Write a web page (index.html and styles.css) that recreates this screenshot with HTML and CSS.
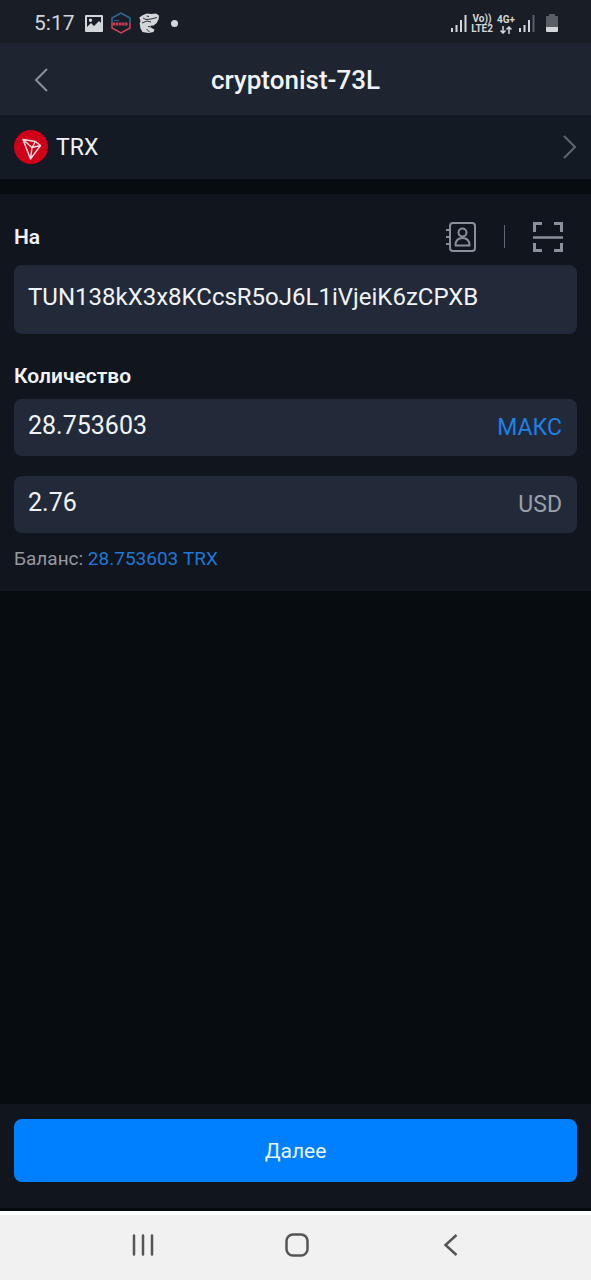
FILE: index.html
```html
<!DOCTYPE html>
<html lang="ru">
<head>
<meta charset="utf-8">
<meta name="viewport" content="width=device-width, initial-scale=1">
<title>cryptonist-73L</title>
<link rel="stylesheet" href="styles.css">
</head>
<body>
<div class="screen">
  <div class="status">
    <div class="status-group status-left">
      <span class="clock">5:17</span>
      <svg class="ico-picture" width="18" height="17" viewBox="0 0 18 17"><path fill="#d3d6da" fill-rule="evenodd" d="M1 0h16a1 1 0 0 1 1 1v15a1 1 0 0 1-1 1H1a1 1 0 0 1-1-1V1a1 1 0 0 1 1-1zm1 2v10l4-4 3 3 5-5 2 2V2zM5.500 3.500a1.700 1.700 0 1 1 0 3.400 1.700 1.700 0 0 1 0-3.400z"/></svg>
      <svg class="ico-hex" width="20" height="22" viewBox="0 0 20 22" fill="none" stroke-width="1.500"><path stroke="#2d6c9d" d="M1 11V6l9-5 9 5v5"/><path stroke="#d0435a" d="M1 11v5l9 5 9-5v-5"/><path stroke="#2b5f91" stroke-width="1.200" d="M3 8.500h5"/><path stroke="#c93a51" stroke-width="3" stroke-dasharray="2.500 .5" d="M1.500 12h15.500"/></svg>
      <svg class="ico-dog" width="20" height="20" viewBox="0 0 20 20"><path fill="#d3d6da" d="M4 2 8 .5l4 .5 5-.5 3 2-.3 3.500-2 4-3.200 2.500-3 .3 1 2.200 3 1.500-1 2.500-5 1-6-1-2-3.500-.8-5L1.500 8 .3 4.500z"/><path fill="none" stroke="#181d26" stroke-width=".9" d="m4 5 3 1.500 5-.5 6-1.500M3 10l5-2 4 1M9 13.500l3.500.5M7.500 3l2.500.5M10.500 19l-3-3"/></svg>
      <span class="dot"></span>
    </div>
    <div class="status-group status-right">
      <svg width="16" height="17" viewBox="0 0 16 17" fill="#d3d6da"><path d="M0 13h2v4H0zM4.500 10h2v7h-2zM9 5h2v12H9zM13.500 0h2v17h-2z"/></svg>
      <span class="net">Vo))<br>LTE2</span>
      <span class="net">4G+<svg class="ico-arrows" width="12" height="8" viewBox="0 0 12 8" fill="none" stroke="#d3d6da" stroke-width="1.500"><path d="M3 0v7M.5 4.500 3 7l2.500-2.500M9 8V1M6.500 3.500 9 1l2.500 2.500"/></svg></span>
      <svg width="16" height="17" viewBox="0 0 16 17" fill="#d3d6da"><path d="M0 13h2v4H0zM4.500 10h2v7h-2zM9 5h2v12H9z"/><path fill="#5a5f68" d="M13.500 0h2v17h-2z"/></svg>
      <svg class="ico-battery" width="12" height="18" viewBox="0 0 12 18"><path fill="#5a5e65" d="M3 0h6v2h2a1 1 0 0 1 1 1v10H0V3a1 1 0 0 1 1-1h2z"/><path fill="#d3d6da" d="M0 13h12v4a1 1 0 0 1-1 1H1a1 1 0 0 1-1-1z"/></svg>
    </div>
  </div>

  <header class="header">
    <button class="icon-btn back" aria-label="Назад"><svg width="14" height="24" viewBox="0 0 14 24" fill="none" stroke="#8a909a" stroke-width="2"><path d="M13 1 2 12l11 11"/></svg></button>
    <h1 class="title">cryptonist-73L</h1>
  </header>

  <a class="coin" href="#">
    <svg width="34" height="34" viewBox="0 0 34 34"><circle cx="17" cy="17" r="17" fill="#d00018"/><path fill="none" stroke="#f6dfe3" stroke-width="1.400" stroke-linejoin="round" d="M9 9.500 21.500 11.500 26.500 15.500 16.500 29zM9 9.500 18 17.500 16.500 29M18 17.500l8.500-2M18 17.500l3.500-6"/></svg>
    <span class="coin-name">TRX</span>
    <svg width="14" height="24" viewBox="0 0 14 24" fill="none" stroke="#5f6670" stroke-width="2"><path d="m1 1 11 11L1 23"/></svg>
  </a>

  <main class="form">
    <div class="to-row">
      <label class="label" for="address">На</label>
      <div class="tools">
        <button class="icon-btn" aria-label="Контакты"><svg width="30" height="30" viewBox="0 0 30 30" fill="none" stroke="#8a8f99" stroke-width="2"><rect x="4" y="1" width="25" height="28" rx="3"/><path d="M0 8h5M0 15h5M0 22h5"/><circle cx="16.500" cy="10.500" r="4"/><path stroke-linejoin="round" d="M9.500 23.500c0-5 3-7.500 7-7.500s7 2.500 7 7.500z"/></svg></button>
        <span class="divider"></span>
        <button class="icon-btn" aria-label="Сканировать"><svg width="30" height="30" viewBox="0 0 30 30" fill="none" stroke="#8a8f99" stroke-width="3"><path d="M1.500 10V1.500H9M21 1.500h7.500V10M28.500 21v7.500H21M9 28.500H1.500V21"/><path stroke-width="2.500" d="M0 15.500h30"/></svg></button>
      </div>
    </div>
    <textarea class="field address" id="address" rows="1" spellcheck="false">TUN138kX3x8KCcsR5oJ6L1iVjeiK6zCPXB</textarea>

    <label class="label amount-label" for="amount">Количество</label>
    <div class="amounts">
      <div class="field amount">
        <input class="value" id="amount" type="text" value="28.753603">
        <button class="max">МАКС</button>
      </div>
      <div class="field amount">
        <input class="value" id="fiat" type="text" value="2.76" aria-label="USD">
        <span class="unit">USD</span>
      </div>
    </div>
    <p class="balance">Баланс: <span class="balance-value">28.753603 TRX</span></p>
  </main>

  <footer class="footer"><button class="next">Далее</button></footer>

  <nav class="nav">
    <button class="icon-btn" aria-label="Недавние"><svg width="22" height="22" viewBox="0 0 22 22" stroke="#555" stroke-width="2.500" stroke-linecap="round"><path d="M2 1.500v19M11 1.500v19M20 1.500v19"/></svg></button>
    <button class="icon-btn" aria-label="Домой"><svg width="24" height="24" viewBox="0 0 24 24" fill="none" stroke="#555" stroke-width="2.500"><rect x="1.500" y="1.500" width="21" height="21" rx="6.500"/></svg></button>
    <button class="icon-btn" aria-label="Назад"><svg width="22" height="22" viewBox="0 0 22 22" fill="none" stroke="#555" stroke-width="2.500"><path d="M16.500 1 5.500 11l11 10"/></svg></button>
  </nav>
</div>
</body>
</html>
```

FILE: styles.css
```css
* {
  box-sizing: border-box;
}

body {
  margin: 0;
  background: #060c0f;
  color: #f0f3f8;
  font-family: Roboto, "Noto Sans", sans-serif;
}

svg {
  display: block;
  flex: none;
}

button,
input,
textarea {
  margin: 0;
  padding: 0;
  border: 0;
  background: none;
  color: inherit;
  font: inherit;
  outline: none;
}

.screen {
  display: flex;
  flex-direction: column;
  min-height: 100vh;
}

.status {
  display: flex;
  justify-content: space-between;
  align-items: center;
  min-height: 43px;
  padding: 3px 33px 0 34px;
  background: #181d26;
  color: #d3d6da;
}

.status-group {
  display: flex;
  align-items: center;
}

.status-left {
  gap: 8px;
}

.clock {
  margin-right: 2px;
  font-size: 21px;
  line-height: 24px;
}

.dot {
  width: 7px;
  height: 7px;
  margin-left: 4px;
  border-radius: 50%;
  background: #d3d6da;
}

.status-right {
  gap: 4px;
}

.net {
  padding-top: 2px;
  font-size: 10px;
  font-weight: 700;
  line-height: 10px;
  text-align: center;
}

.ico-arrows {
  margin: 1px auto 0;
}

.ico-battery {
  margin-left: 7px;
}

.icon-btn {
  display: flex;
  align-items: center;
  justify-content: center;
}

.header {
  display: grid;
  grid-template-columns: 34px 1fr 34px;
  align-items: center;
  min-height: 72px;
  padding: 2px 14px 0;
  background: #1f2530;
}

.back {
  justify-content: flex-end;
}

.title {
  margin: 0;
  font-size: 26px;
  font-weight: 500;
  line-height: 30px;
  text-align: center;
}

.coin {
  display: flex;
  align-items: center;
  gap: 8px;
  min-height: 64px;
  margin-bottom: 15px;
  padding: 0 14px;
  background: #141a24;
  color: inherit;
  text-decoration: none;
}

.coin-name {
  flex: 1;
  padding-top: 2px;
  font-size: 23px;
  line-height: 28px;
}

.form {
  padding: 14px 14px 20px;
  background: #11151e;
}

.to-row {
  display: flex;
  align-items: center;
  justify-content: space-between;
  min-height: 57px;
}

.tools {
  display: flex;
  align-items: center;
  gap: 28px;
  padding-right: 14px;
}

.divider {
  width: 1px;
  height: 23px;
  background: #5f6670;
}

.label {
  font-size: 21px;
  font-weight: 600;
  line-height: 28px;
}

.field {
  width: 100%;
  border-radius: 8px;
  background: #222a3a;
}

.address {
  display: block;
  height: 69px;
  padding: 18px 14px;
  font-size: 24px;
  line-height: 28px;
  resize: none;
  overflow: hidden;
}

.amount-label {
  display: block;
  padding: 28px 0 9px;
}

.amounts {
  display: grid;
  gap: 20px;
}

.amount {
  display: flex;
  align-items: center;
  min-height: 57px;
  padding: 0 15px 0 14px;
}

.value {
  flex: 1;
  min-width: 0;
  padding-bottom: 4px;
  font-size: 25px;
  line-height: 30px;
}

.max,
.unit {
  font-size: 23px;
  line-height: 28px;
}

.max {
  color: #1f80e6;
}

.unit {
  color: #9ba1ab;
}

.balance {
  margin: 14px 0 0;
  color: #9699a0;
  font-size: 19px;
  line-height: 24px;
}

.balance-value {
  color: #1f78d6;
}

.footer {
  margin-top: auto;
  padding: 15px 14px 26px;
  border-bottom: 3px solid #040a0e;
  background: #11151e;
}

.next {
  display: block;
  width: 100%;
  min-height: 63px;
  border-radius: 8px;
  background: #007fff;
  color: #e6f5ff;
  font-size: 21px;
  line-height: 28px;
}

.nav {
  display: flex;
  align-items: center;
  justify-content: center;
  gap: 131px;
  min-height: 69px;
  padding: 0 0 5px 3px;
  border-top: 4px solid #fff;
  background: #f1f1f1;
}
```
